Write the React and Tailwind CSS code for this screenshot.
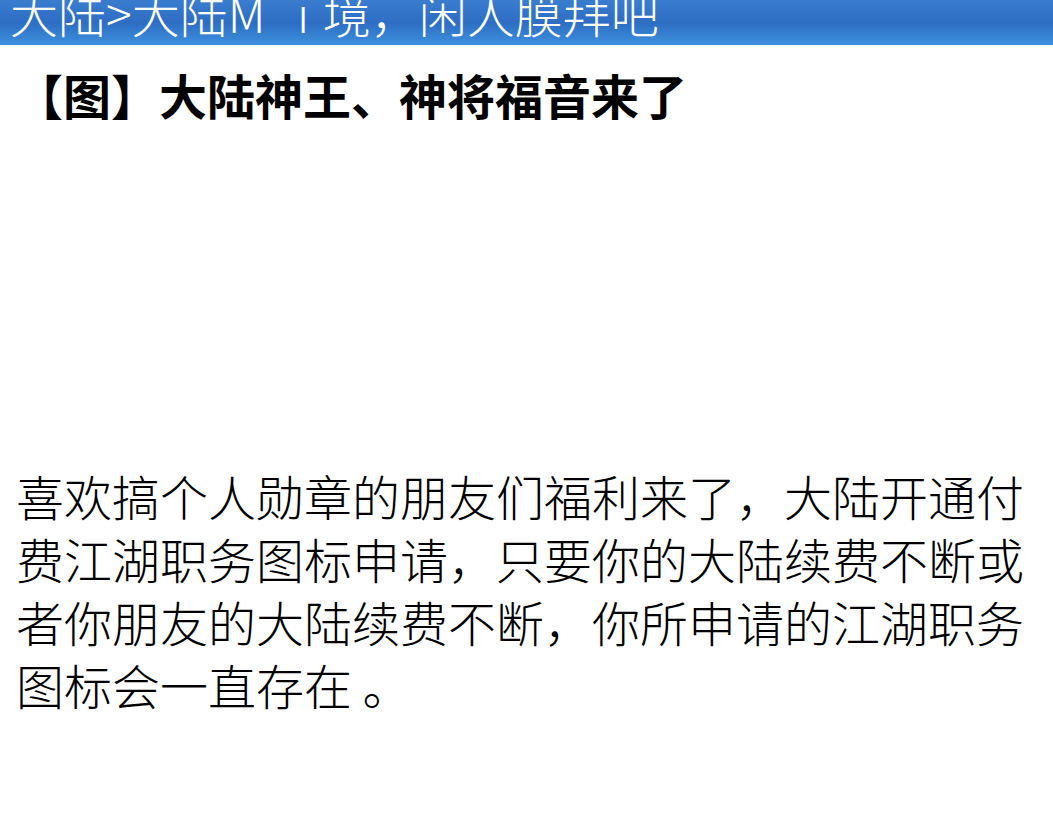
export default function App() {
  const cjk = { fontFamily: '"Noto Sans CJK SC", "Noto Sans", sans-serif' }

  return (
    <div className="min-h-[820px] w-[1053px] bg-white text-black" style={cjk}>
      {/* top bar */}
      <div className="h-[45px] overflow-hidden bg-gradient-to-b from-[#3a7dcf] via-[#2d6dc3] to-[#3d90de]">
        <div className="-mt-[12px] whitespace-nowrap pl-[10px] text-[48px] font-light leading-[48px] text-white">
          大陆&gt;大陆<span>M</span><span className="ml-[32px]">ı</span><span className="ml-[14px]">境，闲人膜拜吧</span>
        </div>
      </div>

      {/* title */}
      <h1 className="mt-[17px] pl-[15px] text-[48px] font-bold leading-[64px]">
        【图】大陆神王、神将福音来了
      </h1>

      {/* image placeholder (not loaded) */}
      <div className="h-[338px]" />

      {/* body */}
      <p className="px-[16px] text-[48px] font-light leading-[63px]">
        喜欢搞个人勋章的朋友们福利来了，大陆开通付费江湖职务图标申请，只要你的大陆续费不断或者你朋友的大陆续费不断，你所申请的江湖职务图标会一直存在 。
      </p>
    </div>
  )
}
